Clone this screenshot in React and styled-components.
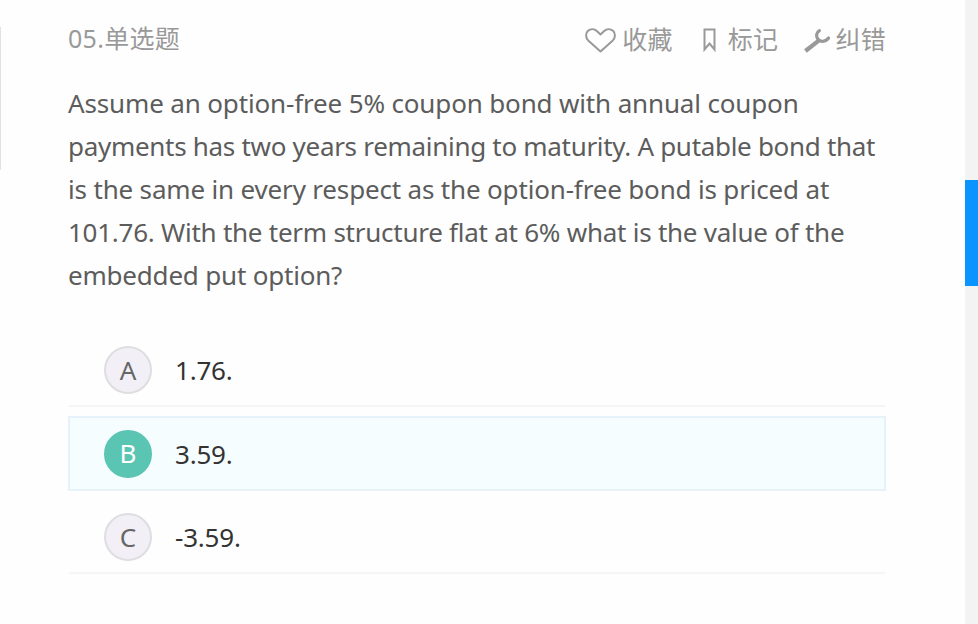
import { useState } from 'react';
import styled, { createGlobalStyle } from 'styled-components';

const question = [
  { text: 'Assume an option-free 5% coupon bond with annual coupon', spacing: -0.15 },
  { text: 'payments has two years remaining to maturity. A putable bond that', spacing: -0.3 },
  { text: 'is the same in every respect as the option-free bond is priced at', spacing: -0.17 },
  { text: '101.76. With the term structure flat at 6% what is the value of the', spacing: -0.25 },
  { text: 'embedded put option?', spacing: -0.2 },
];

const options = [
  { key: 'A', text: '1.76.' },
  { key: 'B', text: '3.59.' },
  { key: 'C', text: '-3.59.' },
];

const HeartIcon = () => (
  <svg width="31" height="26" viewBox="0 0 31 26" fill="none" stroke="#999" strokeWidth="2" strokeLinejoin="round">
    <path d="M15.5 24.4 L3.2 13.4 C0.4 10.4 0.4 6.2 3 3.8 C5.6 1.6 9.4 1.8 11.8 4 L15.5 7.4 L19.2 4 C21.6 1.8 25.4 1.6 28 3.8 C30.6 6.2 30.6 10.4 27.8 13.4 Z" />
  </svg>
);

const BookmarkIcon = () => (
  <svg width="13" height="24" viewBox="0 0 13 24" fill="none" stroke="#999" strokeWidth="2">
    <path d="M1.5 1.5 H11.5 V21.5 L6.5 15.5 L1.5 21.5 Z" />
  </svg>
);

const WrenchIcon = () => (
  <svg width="27" height="26" viewBox="0 0 27 26" fill="none" stroke="#999">
    <path d="M1.4 24 L14.4 13.8" strokeWidth="4.2" />
    <path d="M15.4 3.6 C12.2 5.4 11.8 9.2 13.8 12 C16.2 15.4 21.8 15 24.6 11" strokeWidth="3.2" strokeLinecap="round" />
  </svg>
);

const App = () => {
  const [selected, setSelected] = useState('B');

  return (
    <>
      <GlobalStyle />
      <Page>
        <LeftEdge />
        <Content>
          <Header>
            <Title>05.单选题</Title>
            <Actions>
              <Action $gap={6}><HeartIcon /><Label>收藏</Label></Action>
              <Action $gap={12} $before={30}><BookmarkIcon /><Label>标记</Label></Action>
              <Action $gap={4} $before={26}><WrenchIcon /><Label>纠错</Label></Action>
            </Actions>
          </Header>

          <Question>
            {question.map((line) => (
              <Line key={line.text} $spacing={line.spacing}>{line.text}</Line>
            ))}
          </Question>

          <OptionList>
            {options.map((option) => (
              <Option
                key={option.key}
                $active={option.key === selected}
                onClick={() => setSelected(option.key)}
              >
                <Letter $active={option.key === selected}>{option.key}</Letter>
                <OptionText>{option.text}</OptionText>
              </Option>
            ))}
          </OptionList>
        </Content>
        <Rail>
          <Thumb />
        </Rail>
      </Page>
    </>
  );
};

const GlobalStyle = createGlobalStyle`
* {
  box-sizing: border-box;
}

body {
  margin: 0;
  background: #fefefe;
  overflow: hidden;
  font-family: "Noto Sans", "Noto Sans CJK SC", sans-serif;
}
`

const Page = styled.main`
  display: flex;
  height: 624px;
`

const LeftEdge = styled.div`
  flex: none;
  width: 1px;
  height: 143px;
  margin-top: 27px;
  background: #e2e2e2;
`

const Content = styled.section`
  flex: 1;
  min-width: 0;
  padding: 20px 79px 0 67px;
`

const Header = styled.header`
  display: flex;
  justify-content: space-between;
  align-items: center;
  height: 40px;
  color: #999;
  font-size: 25px;
`

const Title = styled.div`
  line-height: 36px;
  height: 40px;
  letter-spacing: 0.3px;
  white-space: nowrap;
`

const Actions = styled.div`
  display: flex;
`

const Action = styled.div`
  display: flex;
  align-items: center;
  gap: ${({ $gap }) => $gap}px;
  height: 38px;
  margin-left: ${({ $before }) => $before || 0}px;
  cursor: pointer;
`

const Label = styled.span`
  padding-bottom: 2px;
  line-height: 36px;
  letter-spacing: 0.3px;
  white-space: nowrap;
`

const Question = styled.div`
  margin-top: 22px;
  color: #5c5c5c;
  font-size: 26px;
`

const Line = styled.div`
  height: 43px;
  line-height: 43px;
  letter-spacing: ${({ $spacing }) => $spacing}px;
  white-space: nowrap;
`

const OptionList = styled.div`
  margin-top: 36px;
`

const Option = styled.div`
  display: flex;
  align-items: center;
  height: ${({ $active }) => ($active ? 75 : 74)}px;
  margin-bottom: 9px;
  padding-left: 34px;
  border: 2px solid ${({ $active }) => ($active ? '#e6f2fa' : 'transparent')};
  border-bottom-color: ${({ $active }) => ($active ? '#e6f2fa' : '#f5f5f6')};
  background: ${({ $active }) => ($active ? '#f6fdff' : 'transparent')};
  cursor: pointer;
`

const Letter = styled.span`
  display: flex;
  align-items: center;
  justify-content: center;
  width: 48px;
  height: 48px;
  padding-bottom: 1px;
  border: 2px solid ${({ $active }) => ($active ? '#5bc5b3' : '#dedee0')};
  border-radius: 50%;
  background: ${({ $active }) => ($active ? '#5bc5b3' : '#f2f0f6')};
  color: ${({ $active }) => ($active ? '#fff' : '#666')};
  font-size: 26px;
  line-height: 40px;
`

const OptionText = styled.span`
  margin-left: 23px;
  color: #333;
  font-size: 26px;
  letter-spacing: -0.2px;
`

const Rail = styled.aside`
  flex: none;
  width: 13px;
  padding-top: 180px;
  background: #f3f3f3;
`

const Thumb = styled.div`
  height: 106px;
  background: #0994ff;
`

export default App;
